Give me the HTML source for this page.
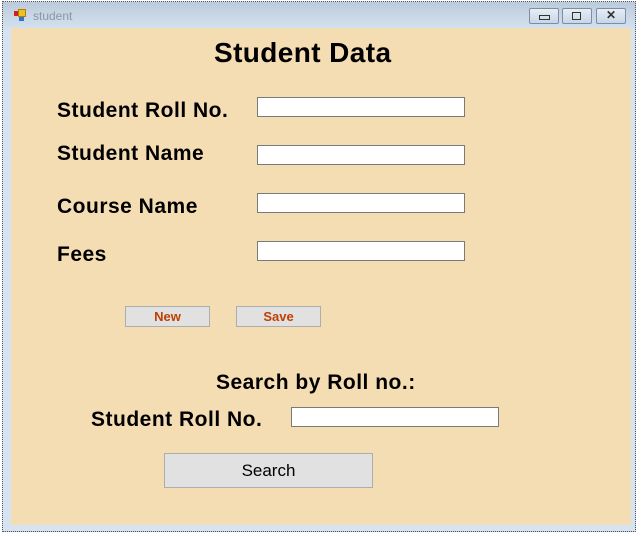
<!DOCTYPE html>
<html><head><style>
body{margin:0;width:641px;height:536px;background:#fff;position:relative;overflow:hidden;font-family:"Liberation Sans",Arial,sans-serif}
.a{position:absolute}
.frame{left:2px;top:1px;width:634px;height:531px;background:linear-gradient(#bccbdb 0,#d4e1ef 27px,#d6e3f1 28px);border:1px dotted #555;box-sizing:border-box}
.client{left:11px;top:28px;width:620px;height:497px;background:#f5ddb3}
.lbl{font-weight:bold;font-size:21px;letter-spacing:0.5px;color:#000}
.tb{background:#fff;border:1px solid #7a7a7a;box-sizing:border-box;height:20px;width:208px}
.btn{background:#e1e1e1;border:1px solid #adadad;box-sizing:border-box;text-align:center}
.wb{top:8px;width:30px;height:16px;border:1px solid #7d8ea3;border-radius:2px;background:linear-gradient(#e6eef7,#c8d6e6);box-sizing:border-box}
</style></head><body>
<div class="a frame"></div>
<div class="a" style="left:14px;top:11px;width:4px;height:5px;background:#d02020"></div>
<div class="a" style="left:18px;top:9px;width:6px;height:6px;background:#f0c020;border:1px solid #b08000"></div>
<div class="a" style="left:19px;top:17px;width:5px;height:4px;background:#3070d0"></div>
<div class="a" style="left:33px;top:9px;font-size:12px;color:#8a96a4">student</div>
<div class="a wb" style="left:529px"><div class="a" style="left:9px;top:6px;width:9px;height:3px;border:1px solid #333"></div></div>
<div class="a wb" style="left:562px"><div class="a" style="left:9px;top:3px;width:7px;height:6px;border:1px solid #333"></div></div>
<div class="a wb" style="left:596px;font-size:12px;text-align:center;line-height:13px;color:#333;font-weight:bold">✕</div>
<div class="a client"></div>
<div class="a" style="left:214px;top:37px;font-size:28px;color:#000;font-weight:bold;letter-spacing:0.4px">Student Data</div>
<div class="a lbl" style="left:57px;top:99px">Student Roll No.</div>
<div class="a lbl" style="left:57px;top:142px">Student Name</div>
<div class="a lbl" style="left:57px;top:195px">Course Name</div>
<div class="a lbl" style="left:57px;top:243px">Fees</div>
<div class="a tb" style="left:257px;top:97px"></div>
<div class="a tb" style="left:257px;top:145px"></div>
<div class="a tb" style="left:257px;top:193px"></div>
<div class="a tb" style="left:257px;top:241px"></div>
<div class="a btn" style="left:125px;top:306px;width:85px;height:21px;color:#c04000;font-weight:bold;font-size:13px;line-height:19px">New</div>
<div class="a btn" style="left:236px;top:306px;width:85px;height:21px;color:#c04000;font-weight:bold;font-size:13px;line-height:19px">Save</div>
<div class="a lbl" style="left:216px;top:371px">Search by Roll no.:</div>
<div class="a lbl" style="left:91px;top:408px">Student Roll No.</div>
<div class="a tb" style="left:291px;top:407px"></div>
<div class="a btn" style="left:164px;top:453px;width:209px;height:35px;font-size:17px;line-height:33px;color:#000">Search</div>
</body></html>
